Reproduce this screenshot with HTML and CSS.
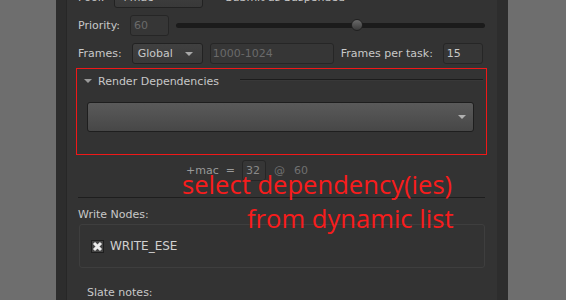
FILE: index.html
```html
<!DOCTYPE html>
<html lang="en">
<head>
    <meta charset="UTF-8">
    <title>Submit to Farm</title>
    <link rel="stylesheet" href="styles.css">
</head>
<body>
    <div class="screen">
        <div class="gutter"></div>
        <div class="panel">
            <div class="main">
                <div class="row row-pool">
                    <span class="label">Pool:</span>
                    <div class="combo combo-pool"><span>+mac</span></div>
                    <span class="check check-small">
                        <svg viewBox="0 0 8 8" width="8" height="8"><path d="M1.5 1.5 L6.5 6.5 M6.5 1.5 L1.5 6.5" stroke="#ddd" stroke-width="2"/></svg>
                    </span>
                    <span class="label">Submit as Suspended</span>
                </div>

                <div class="row">
                    <span class="label">Priority:</span>
                    <div class="field field-priority disabled">60</div>
                    <div class="slider">
                        <div class="track"></div>
                        <div class="handle"></div>
                    </div>
                </div>

                <div class="row">
                    <span class="label">Frames:</span>
                    <div class="combo combo-frames"><span>Global</span><i class="arrow"></i></div>
                    <div class="field field-range disabled">1000-1024</div>
                    <span class="label">Frames per task:</span>
                    <div class="field field-task">15</div>
                </div>

                <div class="group">
                    <div class="group-head">
                        <i class="caret"></i>
                        <span>Render Dependencies</span>
                        <div class="group-line"></div>
                    </div>
                    <div class="dep-combo"><i class="arrow"></i></div>
                </div>

                <div class="pool-summary">
                    <span class="dim">+mac</span>
                    <span class="dim">=</span>
                    <div class="field field-cores">32</div>
                    <span class="dimmer">@</span>
                    <span class="dimmer">60</span>
                </div>

                <div class="separator"></div>

                <div class="section-label">Write Nodes:</div>
                <div class="nodes-box">
                    <span class="check">
                        <svg viewBox="0 0 11 11" width="11" height="11"><path d="M2 2 L9 9 M9 2 L2 9" stroke="#ececec" stroke-width="3"/></svg>
                    </span>
                    <span class="node-name">WRITE_ESE</span>
                </div>

                <div class="section-label slate">Slate notes:</div>
            </div>
            <div class="edge"></div>
        </div>

        <div class="note note-one">select dependency(ies)</div>
        <div class="note note-two">from dynamic list</div>
    </div>
</body>
</html>
```

FILE: styles.css
```css
* {
    margin: 0;
    padding: 0;
    box-sizing: border-box;
}

body {
    width: 566px;
    height: 300px;
    overflow: hidden;
    background-color: #6e6e6e;
    font-family: "DejaVu Sans", sans-serif;
    font-size: 11px;
    color: #c8c8c8;
}

.screen {
    position: relative;
    display: flex;
    height: 300px;
}

.gutter {
    width: 56px;
}

.panel {
    width: 452px;
    display: flex;
    padding-left: 10px;
    background-color: #2d2d2d;
}

.main {
    width: 431px;
    border-left: 1px solid #272727;
    background-color: #333333;
    padding: 0 12px 0 11px;
}

.edge {
    flex: 1;
    background-color: #2d2d2d;
}

/* form rows */
.row {
    display: flex;
    align-items: center;
    gap: 7px;
    height: 21px;
    margin-top: 7px;
}

.row-pool {
    margin-top: -13px;
}

.label {
    margin-right: 3px;
    white-space: nowrap;
}

.combo {
    height: 21px;
    display: flex;
    align-items: center;
    padding-left: 5px;
    border: 1px solid #222;
    border-radius: 3px;
    background: linear-gradient(#404040, #393939);
    position: relative;
}

.combo-pool {
    width: 89px;
}

.combo-frames {
    width: 71px;
}

.arrow {
    position: absolute;
    right: 9px;
    top: 8px;
    border-left: 4px solid transparent;
    border-right: 4px solid transparent;
    border-top: 4px solid #a8a8a8;
}

.field {
    height: 21px;
    display: flex;
    align-items: center;
    padding-left: 3px;
    border: 1px solid #262626;
    border-radius: 3px;
    background-color: #363636;
}

.disabled {
    color: #6a6a6a;
}

.field-priority {
    width: 39px;
}

.field-range {
    width: 124px;
    padding-left: 2px;
}

.field-task {
    width: 40px;
}

.check {
    display: inline-flex;
    align-items: center;
    justify-content: center;
    width: 13px;
    height: 13px;
    border: 1px solid #1e1e1e;
    background-color: #454545;
}

.check-small {
    width: 8px;
    height: 10px;
    margin-top: -10px;
}

/* priority slider */
.slider {
    flex: 1;
    height: 21px;
    position: relative;
    display: flex;
    align-items: center;
}

.track {
    width: 100%;
    height: 5px;
    border-radius: 3px;
    background-color: #1b1b1b;
}

.handle {
    position: absolute;
    left: 175px;
    top: 4px;
    width: 12px;
    height: 12px;
    border-radius: 50%;
    border: 1px solid #202020;
    background: linear-gradient(#6a6a6a, #3a3a3a);
}

/* render dependencies group */
.group {
    margin: 4px -2px 0 -2px;
    height: 87px;
    border: 1px solid #f01818;
    padding: 0 12px 0 7px;
}

.group-head {
    height: 24px;
    display: flex;
    align-items: center;
}

.caret {
    border-left: 4px solid transparent;
    border-right: 4px solid transparent;
    border-top: 4px solid #9a9a9a;
    margin-right: 6px;
}

.group-line {
    flex: 1;
    height: 2px;
    margin: -3px -9px 0 21px;
    border-top: 1px solid #1c1c1c;
    border-bottom: 1px solid #383838;
}

.dep-combo {
    position: relative;
    height: 30px;
    margin: 9px 0 0 3px;
    border: 1px solid #1e1e1e;
    border-radius: 3px;
    background: linear-gradient(#5a5a5a, #474747);
}

.dep-combo .arrow {
    right: 7px;
    top: 12px;
    border-top-color: #b0b0b0;
}

/* pool summary */
.pool-summary {
    display: flex;
    align-items: center;
    gap: 7px;
    height: 21px;
    margin-top: 5px;
    padding-left: 108px;
}

.dim {
    color: #9a9a9a;
}

.dimmer {
    color: #707070;
    margin-right: 2px;
}

.field-cores {
    width: 24px;
    color: #8a8a8a;
    margin-right: 1px;
}

.separator {
    margin-top: 16px;
    height: 1px;
    background-color: #1e1e1e;
}

.section-label {
    margin-top: 10px;
    line-height: 13px;
}

.nodes-box {
    margin: 3px 0 0 1px;
    height: 44px;
    display: flex;
    align-items: center;
    gap: 6px;
    padding-left: 11px;
    border: 1px solid #3e3e3e;
    border-radius: 3px;
}

.node-name {
    font-size: 12px;
    color: #d0d0d0;
}

.slate {
    margin-top: 18px;
    padding-left: 9px;
}

/* annotations drawn over the screenshot */
.note {
    position: absolute;
    font-family: "Open Sans", sans-serif;
    font-size: 25.6px;
    line-height: 26px;
    color: #f81c1c;
    white-space: nowrap;
}

.note-one {
    left: 182px;
    top: 172px;
}

.note-two {
    left: 247px;
    top: 206px;
}
```
